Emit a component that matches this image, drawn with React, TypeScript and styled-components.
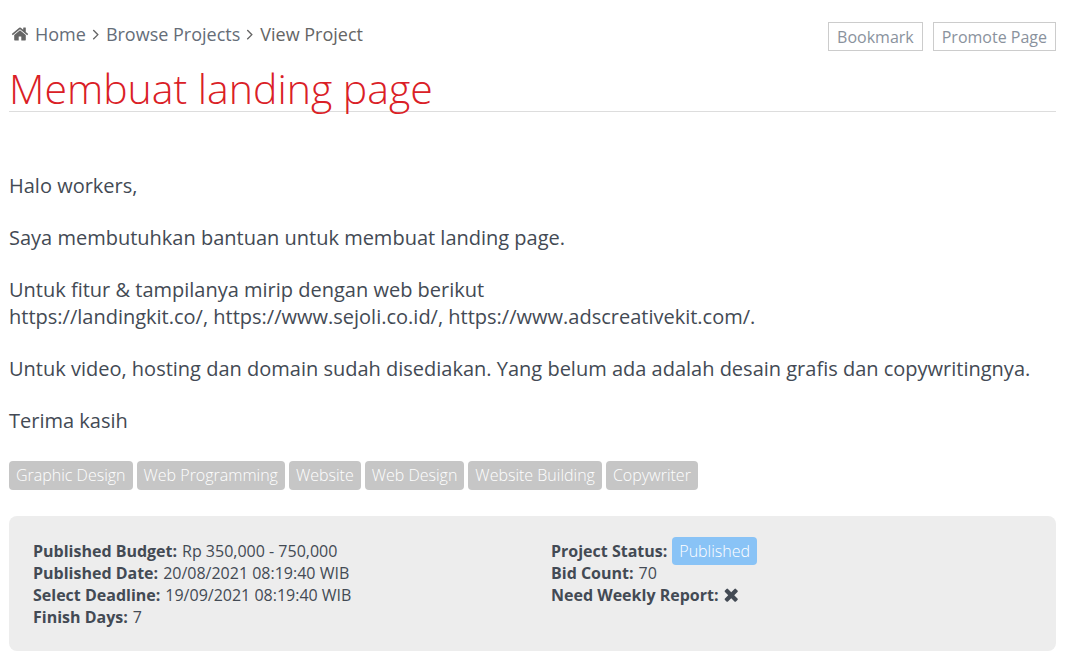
import React from "react";
import styled, { createGlobalStyle } from "styled-components";

const GlobalStyle = createGlobalStyle`
  * { box-sizing: border-box; }
  body {
    margin: 0;
    background: #fff;
    color: #434a54;
    font-family: "Open Sans", sans-serif;
    font-size: 16px;
    line-height: 22px;
  }
`;

const Page = styled.main`
  padding: 22px 20px 12px 9px;
`;

const TopBar = styled.div`
  display: flex;
  flex-wrap: wrap;
  justify-content: space-between;
  align-items: flex-start;
  gap: 12px;
`;

const Breadcrumb = styled.nav`
  display: flex;
  align-items: center;
  gap: 5px;
  padding-left: 2px;
  font-size: 18px;
  line-height: 24px;
  color: #656565;
`;

const Crumb = styled.a`
  display: flex;
  align-items: center;
  gap: 6px;
  color: #656d78;
  text-decoration: none;
`;

const Actions = styled.div`
  display: flex;
  gap: 10px;
`;

const ActionButton = styled.button`
  height: 29px;
  padding: 0 8px;
  border: 1px solid #ccc;
  background: #fff;
  color: #8a929d;
  font: inherit;
  cursor: pointer;
`;

const Title = styled.h1`
  margin: 14px 0 0;
  border-bottom: 1px solid #ddd;
  color: #da2026;
  font-size: 41px;
  font-weight: 300;
  line-height: 46px;
`;

const Description = styled.section`
  margin-top: 60px;
  font-size: 20px;
  line-height: 27px;
`;

const Paragraph = styled.p`
  margin: 0 0 25px;
`;

const Tags = styled.ul`
  display: flex;
  flex-wrap: wrap;
  gap: 4px;
  margin: 27px 0 26px;
  padding: 0;
  list-style: none;
`;

const Tag = styled.li`
  padding: 3px 7px 4px;
  border-radius: 4px;
  background: #c6c6c6;
  color: #fff;
  font-weight: 300;
`;

const Panel = styled.section`
  display: grid;
  grid-template-columns: 1fr 1fr;
  gap: 24px;
  padding: 24px 11px 23px 24px;
  border-radius: 8px;
  background: #ededed;
`;

const Facts = styled.dl`
  margin: 0;
`;

const Fact = styled.div`
  display: flex;
  align-items: center;
  gap: 5px;
  height: 22px;
`;

const Label = styled.dt`
  font-weight: 700;
`;

const Value = styled.dd`
  display: flex;
  margin: 0;
`;

const Status = styled.span`
  padding: 3px 7px;
  border-radius: 4px;
  background: #89c3f6;
  color: #fff;
  font-weight: 300;
`;

const Glyph = styled.svg`
  display: block;
  flex: none;
  fill: currentColor;
`;

const HomeIcon = () => (
  <Glyph width="18" height="18" viewBox="0 0 1792 1792" color="#656565" aria-hidden="true">
    <path d="M1472 992v480q0 26-19 45t-45 19h-384v-384h-256v384h-384q-26 0-45-19t-19-45v-480q0-1 .5-3t.5-3l575-474 575 474q1 2 1 6zm223-69l-62 74q-8 9-21 11h-3q-13 0-21-7l-692-577-692 577q-12 8-24 7-13-2-21-11l-62-74q-8-10-7-23.5t11-21.5l719-599q32-26 76-26t76 26l244 204v-195q0-14 9-23t23-9h192q14 0 23 9t9 23v408l219 182q10 8 11 21.5t-7 23.5z" />
  </Glyph>
);

const Separator = () => (
  <Glyph width="10" height="18" viewBox="400 0 996 1792" aria-hidden="true">
    <path d="M1171 960q0 13-10 23l-466 466q-10 10-23 10t-23-10l-50-50q-10-10-10-23t10-23l393-393-393-393q-10-10-10-23t10-23l50-50q10-10 23-10t23 10l466 466q10 10 10 23z" />
  </Glyph>
);

const CrossIcon = () => (
  <Glyph width="18" height="18" viewBox="150 130 1632 1632" role="img" aria-label="No">
    <path d="M1490 1322q0 40-28 68l-136 136q-28 28-68 28t-68-28l-294-294-294 294q-28 28-68 28t-68-28l-136-136q-28-28-28-68t28-68l294-294-294-294q-28-28-28-68t28-68l136-136q28-28 68-28t68 28l294 294 294-294q28-28 68-28t68 28l136 136q28 28 28 68t-28 68l-294 294 294 294q28 28 28 68z" />
  </Glyph>
);

const tags = [
  "Graphic Design",
  "Web Programming",
  "Website",
  "Web Design",
  "Website Building",
  "Copywriter",
];

const schedule: [string, React.ReactNode][] = [
  ["Published Budget:", "Rp 350,000 - 750,000"],
  ["Published Date:", "20/08/2021 08:19:40 WIB"],
  ["Select Deadline:", "19/09/2021 08:19:40 WIB"],
  ["Finish Days:", "7"],
];

const progress: [string, React.ReactNode][] = [
  ["Project Status:", <Status key="status">Published</Status>],
  ["Bid Count:", "70"],
  ["Need Weekly Report:", <CrossIcon key="report" />],
];

const FactList = ({ items }: { items: [string, React.ReactNode][] }) => (
  <Facts>
    {items.map(([label, value]) => (
      <Fact key={label}>
        <Label>{label}</Label>
        <Value>{value}</Value>
      </Fact>
    ))}
  </Facts>
);

export default function App() {
  return (
    <>
      <GlobalStyle />
      <Page>
        <TopBar>
          <Breadcrumb aria-label="Breadcrumb">
            <Crumb href="#home"><HomeIcon />Home</Crumb>
            <Separator />
            <Crumb href="#projects">Browse Projects</Crumb>
            <Separator />
            <span>View Project</span>
          </Breadcrumb>
          <Actions>
            <ActionButton type="button">Bookmark</ActionButton>
            <ActionButton type="button">Promote Page</ActionButton>
          </Actions>
        </TopBar>
        <Title>Membuat landing page</Title>
        <Description>
          <Paragraph>Halo workers,</Paragraph>
          <Paragraph>Saya membutuhkan bantuan untuk membuat landing page.</Paragraph>
          <Paragraph>
            Untuk fitur &amp; tampilanya mirip dengan web berikut
            <br />
            https://landingkit.co/, https://www.sejoli.co.id/, https://www.adscreativekit.com/.
          </Paragraph>
          <Paragraph>
            Untuk video, hosting dan domain sudah disediakan. Yang belum ada adalah desain grafis dan copywritingnya.
          </Paragraph>
          <Paragraph>Terima kasih</Paragraph>
        </Description>
        <Tags>
          {tags.map((tag) => (
            <Tag key={tag}>{tag}</Tag>
          ))}
        </Tags>
        <Panel>
          <FactList items={schedule} />
          <FactList items={progress} />
        </Panel>
      </Page>
    </>
  );
}
